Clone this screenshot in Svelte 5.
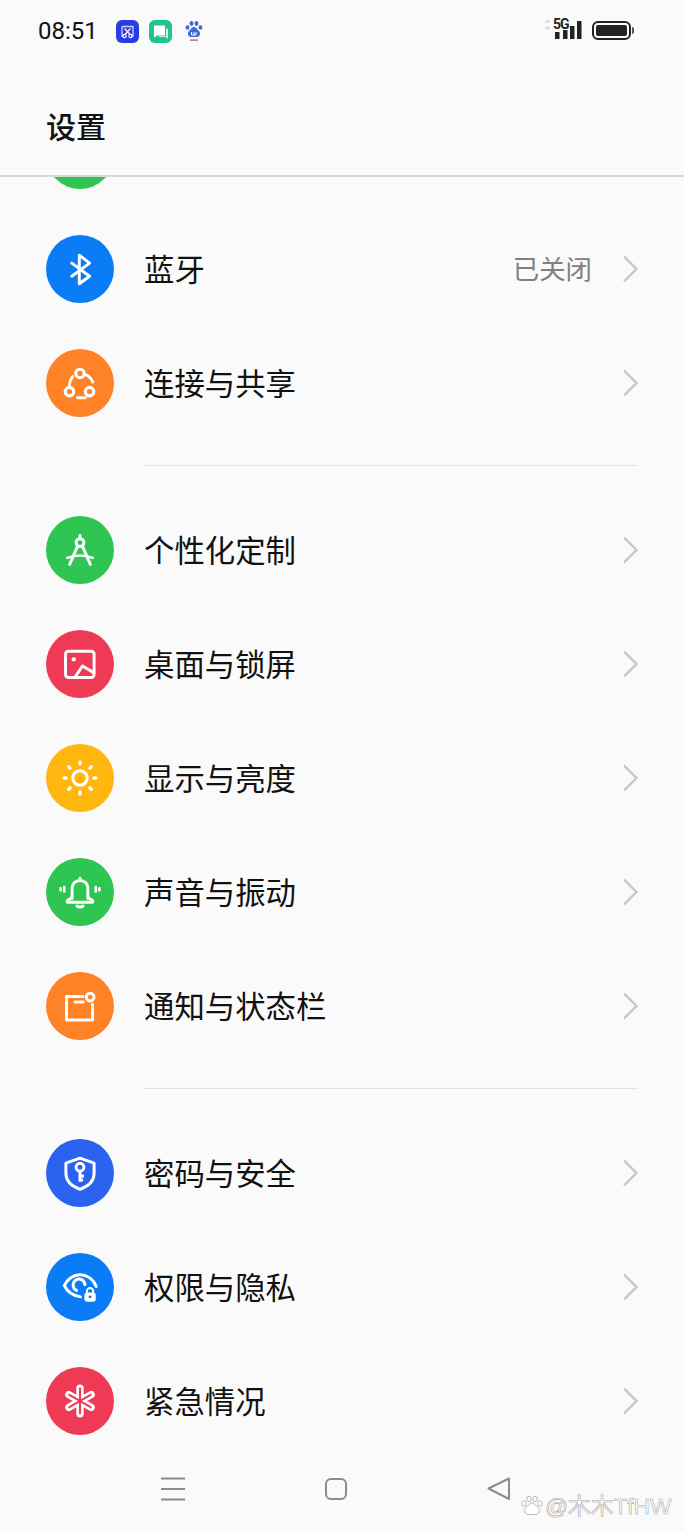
<script>
  const groups = [
    [
      { id: 'hidden', color: '#2fc553', label: '' },
      { id: 'bluetooth', color: '#0a7cf6', label: '蓝牙', value: '已关闭' },
      { id: 'share', color: '#ff8227', label: '连接与共享' }
    ],
    [
      { id: 'compass', color: '#2fc553', label: '个性化定制' },
      { id: 'image', color: '#ee3a55', label: '桌面与锁屏' },
      { id: 'sun', color: '#ffb60f', label: '显示与亮度' },
      { id: 'bell', color: '#2fc553', label: '声音与振动' },
      { id: 'notice', color: '#ff8227', label: '通知与状态栏' }
    ],
    [
      { id: 'shield', color: '#2b62f0', label: '密码与安全' },
      { id: 'eye', color: '#0a7cf6', label: '权限与隐私' },
      { id: 'sos', color: '#ee3a55', label: '紧急情况' }
    ]
  ];
  const rays = [0, 45, 90, 135, 180, 225, 270, 315];
</script>

<div class="page">
  <div class="status">
    <span class="time">08:51</span>
    <div class="apps">
      <svg class="app" viewBox="0 0 23 23" width="23" height="23">
        <rect width="23" height="23" rx="6" fill="#2a3be0" />
        <path d="M6 6.500h11v9.500h-2M8 16H6V6.500" fill="none" stroke="#cfd4fa" stroke-width="1.300" />
        <path d="M8.500 8.500l6 6.500M14.500 8.500l-6 6.500" stroke="#fff" stroke-width="1.200" />
        <circle cx="8.500" cy="16" r="1.700" fill="none" stroke="#fff" stroke-width="1.100" />
        <circle cx="14.500" cy="16" r="1.700" fill="none" stroke="#fff" stroke-width="1.100" />
      </svg>
      <svg class="app" viewBox="0 0 23 23" width="23" height="23">
        <rect width="23" height="23" rx="6" fill="#1fc586" />
        <path d="M5 5.500h10a1 1 0 0 1 1 1v8a1 1 0 0 1-1 1H8l-3 2z" fill="#fff" />
        <path d="M17 8.500h1a1 1 0 0 1 1 1v9.500l-2.500-2H10v-1h7z" fill="#cdf3e3" />
      </svg>
      <svg class="app paw" viewBox="0 0 18 22" width="18" height="22">
        <ellipse cx="2.500" cy="7.500" rx="1.900" ry="2.300" fill="#3f6bd8" />
        <ellipse cx="6.500" cy="3.500" rx="1.900" ry="2.400" fill="#3f6bd8" />
        <ellipse cx="11.500" cy="3.500" rx="1.900" ry="2.400" fill="#3f6bd8" />
        <ellipse cx="15.500" cy="7.500" rx="1.900" ry="2.300" fill="#3f6bd8" />
        <path d="M9 7c2.500 0 3 2.500 5 4 2 2 1 6-2 6H6c-3 0-4-4-2-6 2-1.500 2.500-4 5-4z" fill="#3f6bd8" />
        <path d="M6.500 12v3h2.500v-3M11 12v3h-2" fill="none" stroke="#fff" stroke-width="1" />
        <rect x="5" y="19.500" width="8" height="1.200" fill="#a05a6a" />
      </svg>
    </div>
    <div class="system">
      <div class="signal">
        <svg viewBox="0 0 37 28" width="37" height="28">
          <path d="M0.500 6l2-2.500 2 2.500M0.500 9.500l2 2.500 2-2.500" fill="none" stroke="#c8c8c8" stroke-width="1.100" />
          <rect x="10" y="15" width="4.500" height="7" fill="#222" />
          <rect x="18" y="13" width="4.500" height="9" fill="#222" />
          <rect x="25" y="9" width="4.500" height="13" fill="#222" />
          <rect x="32" y="4" width="4.500" height="18" fill="#222" />
        </svg>
        <span class="fiveg">5G</span>
      </div>
      <div class="battery"><div class="charge"></div></div>
      <div class="tip"></div>
    </div>
  </div>

  <header class="title-bar"><h1>设置</h1></header>

  <main class="list">
    <div class="scroll">
      {#each groups as group, g}
        {#if g > 0}<div class="divider"></div>{/if}
        {#each group as item}
          <div class="row">
            <div class="circle" style="background:{item.color}">
              <svg viewBox="0 0 69 69" width="68" height="68" fill="none" stroke="#fff" stroke-width="2.700" stroke-linecap="round" stroke-linejoin="round">
                {#if item.id === 'bluetooth'}
                  <path d="M26.200 28.500L44.200 41.800L33.800 49.500V20.500L44.200 28.500L26.200 41.800" stroke-width="3" />
                {:else if item.id === 'share'}
                  <circle cx="34.500" cy="24.800" r="4.300" stroke-width="3.200" />
                  <circle cx="23.800" cy="43.200" r="4.300" stroke-width="3.200" />
                  <circle cx="44.200" cy="43.200" r="4.300" stroke-width="3.200" />
                  <path d="M40 26C43.500 27 45.500 29.500 47.500 33.500" stroke-width="3" />
                  <path d="M23.800 36.500C24 33 25 30.500 27 28" stroke-width="3" />
                  <path d="M32 49.500H40" stroke-width="3" />
                {:else if item.id === 'compass'}
                  <circle cx="34.500" cy="27" r="4" stroke-width="3" />
                  <path d="M34.500 20V22.500" stroke-width="3" />
                  <path d="M31.800 31L24 49M37.200 31L45 49" stroke-width="3" />
                  <path d="M21.500 42.500Q34.500 37.500 47.500 42.500" stroke-width="2.600" />
                {:else if item.id === 'image'}
                  <rect x="19.800" y="21.500" width="29" height="26.700" rx="3" stroke-width="3" />
                  <circle cx="28.200" cy="29.800" r="2.200" fill="#fff" stroke="none" />
                  <path d="M30 47L37 36.500L48 43" stroke-width="3" />
                {:else if item.id === 'sun'}
                  <circle cx="34.500" cy="34.500" r="7.300" stroke-width="3" />
                  {#each rays as r}
                    <path d="M34.500 18.300V20.300" transform="rotate({r} 34.500 34.500)" stroke-width="3.400" />
                  {/each}
                {:else if item.id === 'bell'}
                  <path d="M26.500 41V30.500C26.500 26 30 22.800 34.500 22.800S42.500 26 42.500 30.500V41" stroke-width="3" />
                  <path d="M34.500 20.500V22" stroke-width="3" />
                  <path d="M26.500 39C26.500 41 24 41 22 43C21 44 21.500 45 22.500 45H46.500C47.500 45 48 44 47 43C45 41 42.500 41 42.500 39" stroke-width="3" />
                  <path d="M31.500 48.800Q34.500 50.500 37.500 48.800" stroke-width="3" />
                  <path d="M14.800 30.800V32.800M18.500 29.500V34M50.500 29.500V34M54.200 30.800V32.800" />
                {:else if item.id === 'notice'}
                  <path d="M37.500 24.800H20.800V48.800H47.200V33" stroke-width="3" />
                  <path d="M29.500 30.500H37.800" stroke-width="3" />
                  <circle cx="44.800" cy="25.500" r="3.900" stroke-width="3" />
                {:else if item.id === 'shield'}
                  <path d="M34.500 19.500L48.800 24.500V35C48.800 42.500 43 48 34.500 51C26 48 20.200 42.500 20.200 35V24.500Z" stroke-width="3" />
                  <circle cx="34.500" cy="28.700" r="4" stroke-width="3" />
                  <path d="M34.500 33V43.500M34.500 37.500H38.500M34.500 41.500H37.500" stroke-width="3" stroke-linecap="butt" />
                {:else if item.id === 'eye'}
                  <path d="M51 34C48 26 41 22 34.500 22C28 22 21.500 26.500 18.500 33C21.500 39 28 43.500 35 44.500" stroke-width="3" />
                  <path d="M31 38A6 6 0 1 1 39.500 32" stroke-width="3" />
                  <rect x="39" y="40" width="11.500" height="9.500" rx="2.500" fill="#fff" stroke="none" />
                  <path d="M41.500 40V38.800A3.200 3.200 0 0 1 47.900 38.800V40" stroke-width="2" />
                  <circle cx="44.700" cy="44.500" r="1.500" fill="#0a7cf6" stroke="none" />
                {:else if item.id === 'sos'}
                  <path d="M34.500 21.500V47.500M23.200 28L45.800 41M45.800 28L23.200 41" stroke-width="7.500" />
                  <path d="M34.500 22V47M23.700 28.300L45.300 40.700M45.300 28.300L23.700 40.700" stroke="#ee3a55" stroke-width="2.200" />
                {/if}
              </svg>
            </div>
            {#if item.label}
              <span class="label">{item.label}</span>
              {#if item.value}<span class="value">{item.value}</span>{/if}
              <svg class="chevron" viewBox="0 0 17 28" width="17" height="28">
                <path d="M2 1.500L14.500 14L2 26.500" fill="none" stroke="#c6c6c6" stroke-width="2.300" />
              </svg>
            {/if}
          </div>
        {/each}
      {/each}
    </div>
  </main>

  <nav class="nav">
    <svg viewBox="0 0 24 24" width="24" height="24" fill="none" stroke="#8c8c8c" stroke-width="1.800">
      <path d="M0 1.500H24M0 12H24M0 22.500H24" />
    </svg>
    <svg viewBox="0 0 24 24" width="24" height="24" fill="none" stroke="#8c8c8c" stroke-width="2">
      <rect x="2" y="2" width="20" height="20" rx="5" />
    </svg>
    <svg viewBox="0 0 24 24" width="24" height="24" fill="none" stroke="#8c8c8c" stroke-width="2" stroke-linejoin="round">
      <path d="M22 1.500V22L1.500 11.500Z" />
    </svg>
  </nav>

  <div class="watermark">
    <svg viewBox="0 0 22 20" width="22" height="20" fill="#fff" stroke="#b0b0b0" stroke-width="0.900">
      <ellipse cx="3" cy="7.500" rx="2.200" ry="2.700" />
      <ellipse cx="8" cy="3" rx="2.200" ry="2.700" />
      <ellipse cx="14" cy="3" rx="2.200" ry="2.700" />
      <ellipse cx="19" cy="7.500" rx="2.200" ry="2.700" />
      <path d="M11 7c3 0 3.500 3 6 4.500 2.500 2.500 1 7-2.500 7h-7C4 18.500 2.500 14 5 11.500 7.500 10 8 7 11 7z" />
    </svg>
    <span>@木木TfHW</span>
  </div>
</div>

<style>
  :global(body) {
    margin: 0;
    background: #fafafa;
  }
  .page {
    position: relative;
    width: 684px;
    height: 1531px;
    display: flex;
    flex-direction: column;
    overflow: hidden;
    background: #fafafa;
    color: #111;
    font-family: "Noto Sans CJK SC", "Noto Sans", sans-serif;
  }
  .status {
    height: 60px;
    flex: none;
    box-sizing: border-box;
    padding: 2px 50px 0 38px;
    display: flex;
    align-items: center;
  }
  .time {
    font-family: Roboto, sans-serif;
    font-size: 24px;
    color: #111;
    width: 78px;
  }
  .apps {
    display: flex;
    align-items: center;
    gap: 10px;
  }
  .paw {
    margin-left: 3px;
  }
  .system {
    margin-left: auto;
    display: flex;
    align-items: center;
  }
  .signal {
    position: relative;
    height: 28px;
  }
  .signal svg {
    display: block;
  }
  .fiveg {
    position: absolute;
    left: 8px;
    top: 0;
    font-family: Roboto, sans-serif;
    font-weight: 700;
    font-size: 14px;
    letter-spacing: -1px;
    color: #222;
    line-height: 14px;
  }
  .battery {
    margin: -2px 0 0 10px;
    box-sizing: border-box;
    width: 39px;
    height: 19px;
    border: 2px solid #222;
    border-radius: 6px;
    padding: 2px;
  }
  .charge {
    height: 100%;
    background: #222;
    border-radius: 2px;
  }
  .tip {
    width: 2px;
    height: 7px;
    margin: -2px 0 0 1px;
    background: #555;
    border-radius: 0 2px 2px 0;
  }
  .title-bar {
    height: 115px;
    flex: none;
    display: flex;
    align-items: center;
    padding: 0 46px;
    border-bottom: 2px solid #d6d6d6;
  }
  h1 {
    margin: 14px 0 0;
    font-size: 30px;
    font-weight: 500;
    line-height: 40px;
    color: #111;
  }
  .list {
    flex: 1;
    min-height: 0;
    overflow: hidden;
  }
  .scroll {
    margin-top: -79px;
  }
  .row {
    height: 114px;
    display: flex;
    align-items: center;
    padding: 0 45px 0 46px;
  }
  .circle {
    width: 68px;
    height: 68px;
    flex: none;
    border-radius: 50%;
  }
  .circle svg {
    display: block;
  }
  .label {
    margin-left: 30px;
    padding-bottom: 3px;
    font-size: 30.4px;
    line-height: 40px;
    font-weight: 400;
    color: #111;
  }
  .value {
    margin-left: auto;
    margin-right: 30px;
    padding-bottom: 3px;
    font-size: 26.4px;
    color: #808080;
  }
  .chevron {
    margin-left: auto;
    flex: none;
  }
  .value + .chevron {
    margin-left: 0;
  }
  .divider {
    height: 1px;
    margin: 25px 46px 27px 144px;
    background: #e3e3e3;
  }
  .nav {
    height: 73px;
    flex: none;
    box-sizing: border-box;
    padding: 0 173px 12px 161px;
    display: flex;
    align-items: center;
    justify-content: space-between;
  }
  .watermark {
    position: absolute;
    left: 521px;
    bottom: 12px;
    display: flex;
    align-items: center;
    gap: 2px;
    font-family: "Liberation Sans", "Noto Sans CJK SC", sans-serif;
    font-size: 22.7px;
    line-height: 26px;
    color: #fff;
    -webkit-text-stroke: 0.6px #a8a8a8;
  }
</style>
